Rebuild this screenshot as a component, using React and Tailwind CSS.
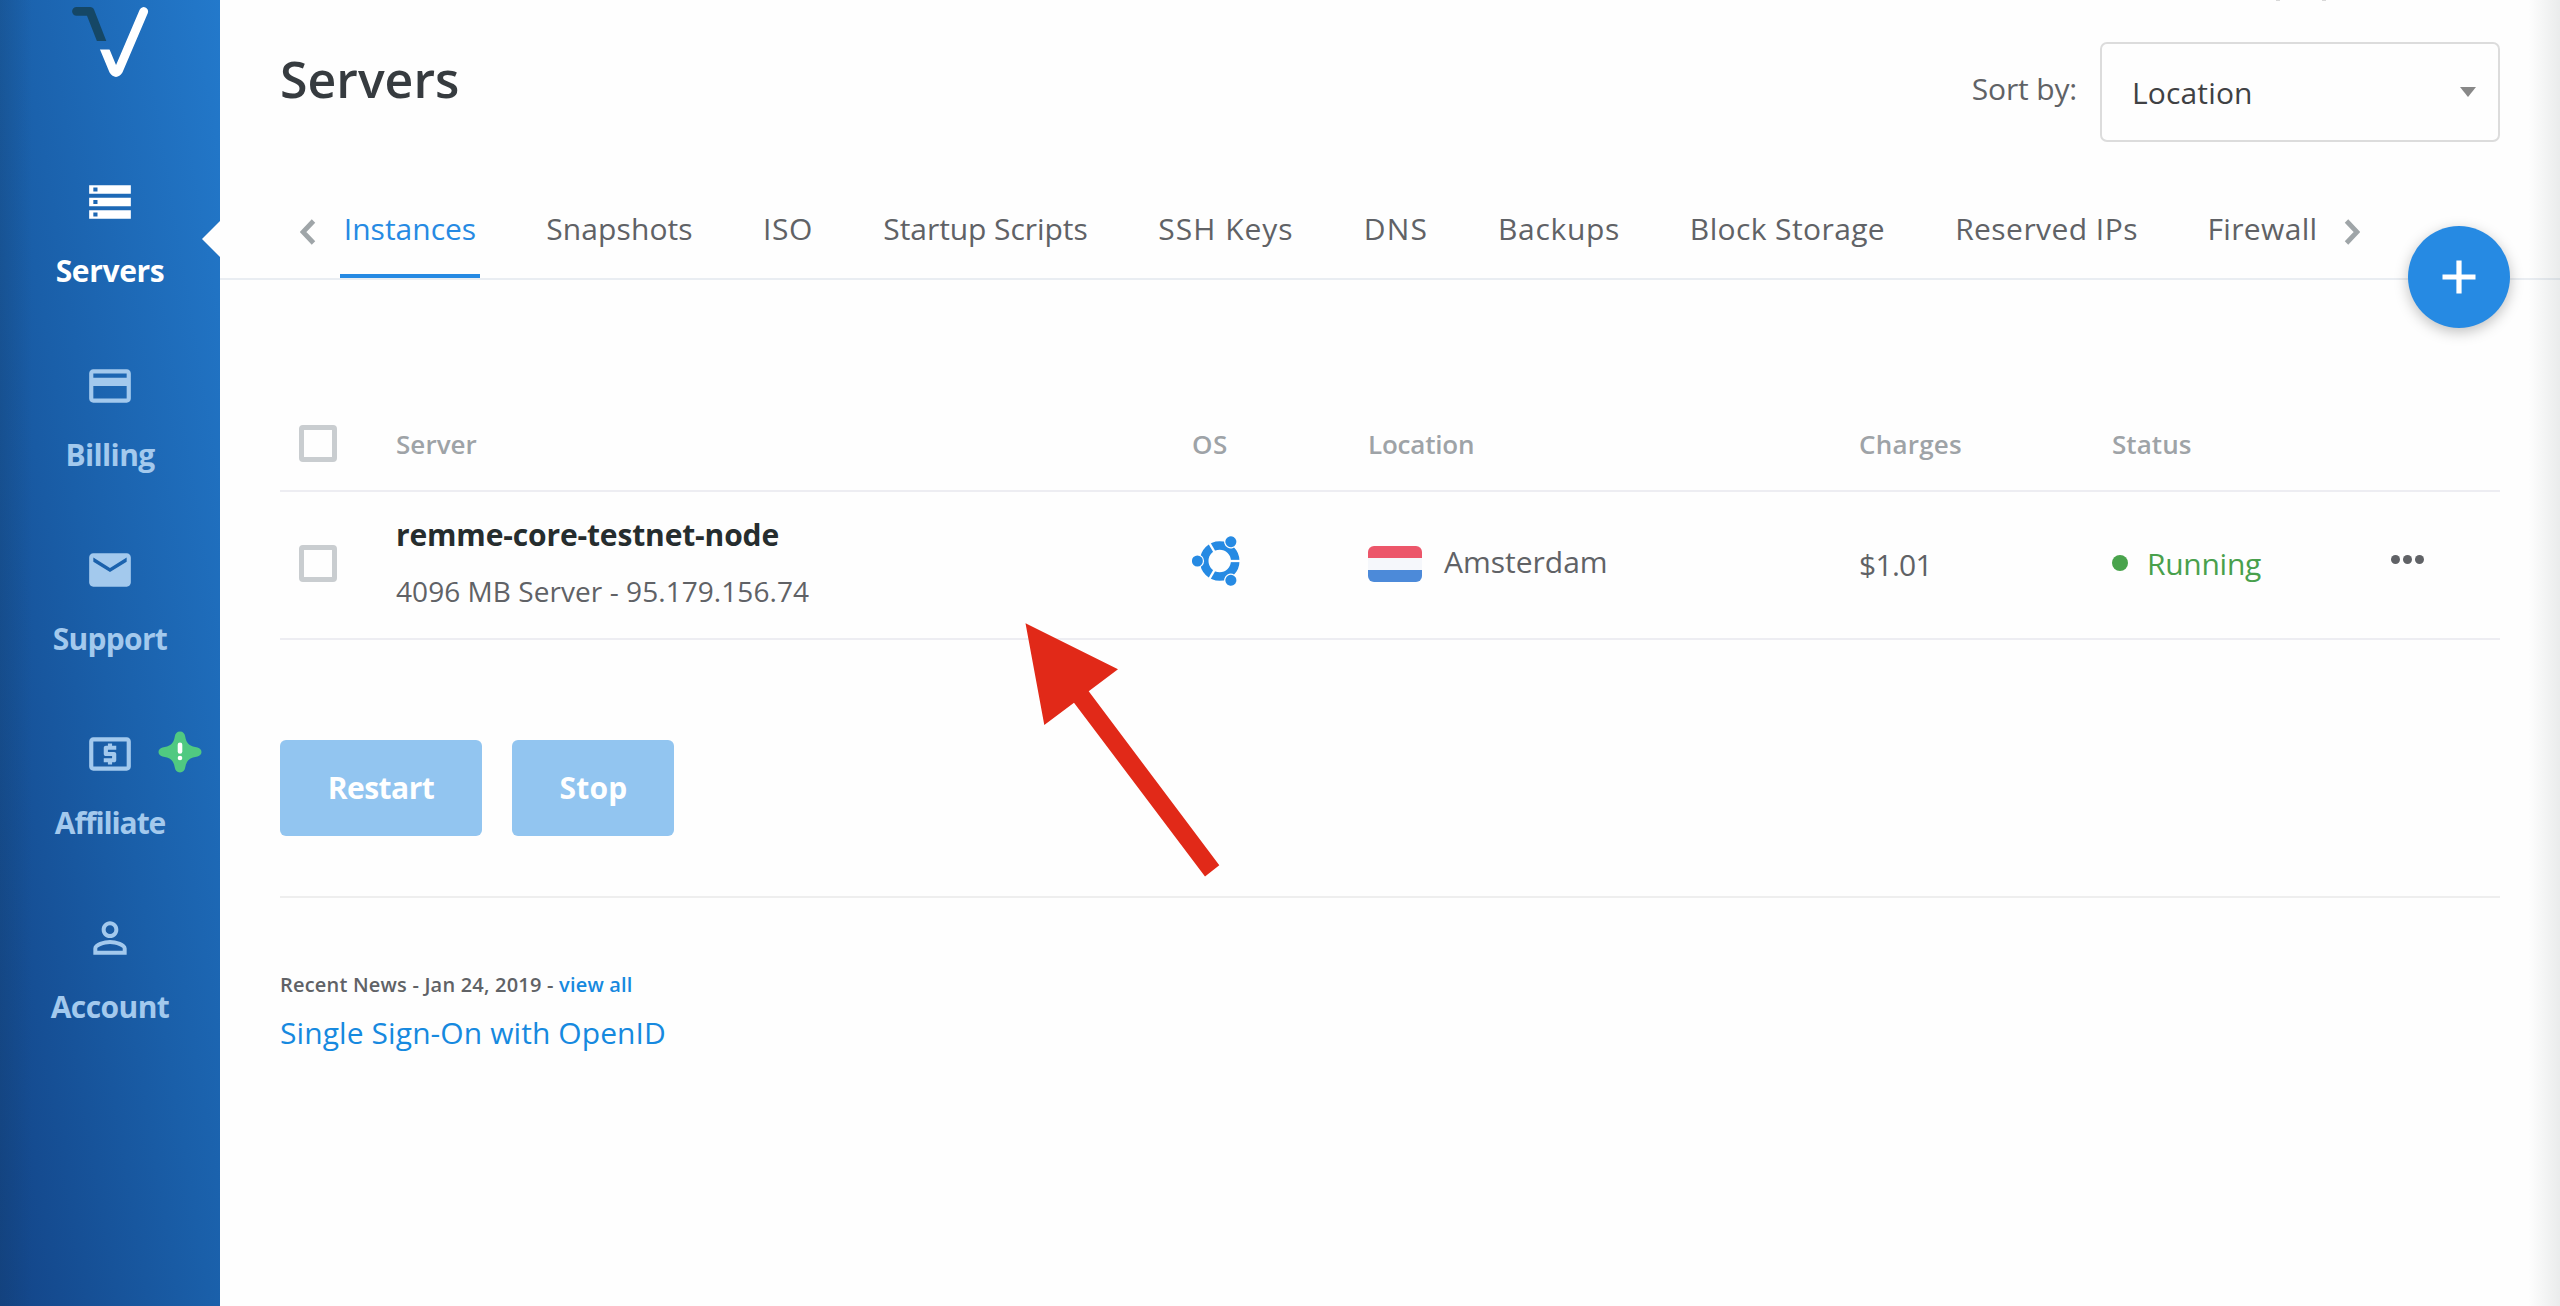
import { MdStorage, MdPayment, MdEmail, MdLocalAtm, MdPersonOutline } from "react-icons/md";

const NAV = [
  { label: "Servers", Icon: MdStorage, track: "tracking-[-0.38px]", active: true },
  { label: "Billing", Icon: MdPayment, track: "tracking-[-0.6px]" },
  { label: "Support", Icon: MdEmail, track: "tracking-[-0.73px]" },
  { label: "Affiliate", Icon: MdLocalAtm, track: "tracking-[-1.1px]", badge: true },
  { label: "Account", Icon: MdPersonOutline, track: "tracking-[-0.59px]" },
];

const TABS = [
  { label: "Instances", cls: "w-[140px] tracking-[-0.01px]", active: true },
  { label: "Snapshots", cls: "w-[156px] tracking-[0.09px]" },
  { label: "ISO", cls: "w-[58px] tracking-[0.59px]" },
  { label: "Startup Scripts", cls: "w-[214px] tracking-[-0.07px]" },
  { label: "SSH Keys", cls: "w-[144px] tracking-[0.99px]" },
  { label: "DNS", cls: "w-[73px] tracking-[1.3px]" },
  { label: "Backups", cls: "w-[130px] tracking-[0.68px]" },
  { label: "Block Storage", cls: "w-[204px] tracking-[0.39px]" },
  { label: "Reserved IPs", cls: "w-[191px] tracking-[0.44px]" },
  { label: "Firewall", cls: "w-[118px] tracking-[0.34px]" },
];

const COLS = "grid grid-cols-[116px_796px_176px_491px_253px_279px_1fr] items-center";

function Logo() {
  return (
    <svg className="mx-auto block h-[78px] w-[80px]" viewBox="70 0 80 78">
      <path d="M76.500 11.300H90L102 42" fill="none" stroke="#154766" strokeWidth="8.800" strokeLinecap="round" strokeLinejoin="round" clipPath="url(#logo-top)" />
      <path d="M102.500 44L113.500 70.500Q116 74.500 118.500 70.500L143.700 11.500" fill="none" stroke="#fff" strokeWidth="8.800" strokeLinecap="round" strokeLinejoin="round" clipPath="url(#logo-bottom)" />
      <defs>
        <clipPath id="logo-top"><rect x="70" y="0" width="50" height="41" /></clipPath>
        <clipPath id="logo-bottom"><path d="M70 49.500H113V0H150V78H70Z" /></clipPath>
      </defs>
    </svg>
  );
}

function StarBadge() {
  return (
    <svg className="absolute top-[2px] left-[158px] h-[42px] w-[44px]" viewBox="0 0 44 42">
      <path
        fill="#50c981"
        d="M22 0.500C25 0.500 26.800 2.600 27.200 5.400C28 10.400 30 13.800 35 15.400L39.500 16.600C42 17.400 43.500 19 43.500 21C43.500 23 42 24.600 39.500 25.400L35 26.600C30 28.200 28 31.600 27.200 36.600C26.800 39.400 25 41.500 22 41.500C19 41.500 17.200 39.400 16.800 36.600C16 31.600 14 28.200 9 26.600L4.500 25.400C2 24.600 0.500 23 0.500 21C0.500 19 2 17.400 4.500 16.600L9 15.400C14 13.800 16 10.400 16.800 5.400C17.200 2.600 19 0.500 22 0.500Z"
      />
      <path d="M22 13.800V20.500" stroke="#fff" strokeWidth="4.600" strokeLinecap="round" />
      <circle cx="22" cy="27" r="2.300" fill="#fff" />
    </svg>
  );
}

function Chevron({ flip }) {
  return (
    <svg className={flip ? "h-[26px] w-[16px] rotate-180" : "h-[26px] w-[16px]"} viewBox="0 0 16 26">
      <path d="M13.500 2L3 13L13.500 24" fill="none" stroke="#9fa5a8" strokeWidth="4.800" />
    </svg>
  );
}

function UbuntuIcon() {
  return (
    <svg className="h-[50px] w-[50px]" viewBox="0 0 50 50">
      <circle cx="27.700" cy="25" r="15.500" fill="none" stroke="#268ae3" strokeWidth="8.600" />
      {[0, 120, 240].map((a) => (
        <path key={a} d="M36 25H50" stroke="#fefefe" strokeWidth="2.300" transform={`rotate(${a} 27.700 25)`} />
      ))}
      {[60, 180, 300].map((a) => (
        <g key={a} transform={`rotate(${a} 27.700 25)`}>
          <circle cx="50" cy="25" r="6.700" fill="#fefefe" />
          <circle cx="50" cy="25" r="5.500" fill="#268ae3" />
        </g>
      ))}
    </svg>
  );
}

function Checkbox() {
  return <span className="ml-[19px] block h-[37px] w-[38px] rounded-[4px] border-[5px] border-[#c9cdd0]" />;
}

export default function App() {
  return (
    <div className="relative flex h-[1306px] w-[2560px] overflow-hidden bg-[#fefefe] font-['Open_Sans',sans-serif]">
      <aside className="relative h-full w-[220px] shrink-0 bg-[linear-gradient(to_bottom_left,#2379cb,#1a5fa9_52%,#134487)]">
        <div className="absolute inset-y-0 left-0 w-[32px] bg-linear-to-r from-[#143c64]/25 to-transparent" />
        <Logo />
        <nav className="relative mt-[99px]">
          {NAV.map(({ label, Icon, track, active, badge }) => (
            <div key={label} className={`relative flex h-[184px] flex-col items-center ${active ? "text-white" : "text-[#a3c9ed]"}`}>
              <Icon className="size-[50px]" />
              <span className={`mt-[26px] text-[30px] leading-[36px] font-bold ${track}`}>{label}</span>
              {badge && <StarBadge />}
              {active && (
                <svg className="absolute top-[44px] right-0 h-[36px] w-[18px]" viewBox="0 0 18 36">
                  <path d="M18 0V36L0 18Z" fill="#fefefe" />
                </svg>
              )}
            </div>
          ))}
        </nav>
      </aside>

      <main className="min-w-0 flex-1">
        <header className="flex items-start justify-between pt-[42px] pr-[60px] pl-[60px]">
          <h1 className="mt-[7px] text-[50px] leading-[60px] font-semibold text-[#363b3f]">Servers</h1>
          <div className="flex items-start">
            <span className="mt-[29px] mr-[23px] text-[30px] leading-[36px] tracking-[-0.15px] text-[#606266]">Sort by:</span>
            <div className="flex h-[100px] w-[400px] items-center justify-between rounded-[7px] border-2 border-[#dcdcdc] pr-[22px] pl-[30px]">
              <span className="mt-px text-[30px] leading-[36px] tracking-[0.15px] text-[#3f4144]">Location</span>
              <span className="h-0 w-0 border-x-8 border-t-10 border-x-transparent border-t-[#888888]" />
            </div>
          </div>
        </header>

        <div className="relative flex h-[138px] items-end border-b-2 border-[#e9edf2] pl-[80px]">
          <div className="mb-[33px]"><Chevron /></div>
          <nav className="ml-[24px] flex gap-[61.5px]">
            {TABS.map(({ label, cls, active }) => (
              <div
                key={label}
                className={`flex h-[67px] justify-center whitespace-nowrap border-b-4 text-[30px] leading-[36px] ${cls} ${
                  active ? "border-[#268ae3] text-[#268ae3]" : "border-transparent text-[#606266]"
                }`}
              >
                {label}
              </div>
            ))}
          </nav>
          <div className="mb-[33px] ml-[22px]"><Chevron flip /></div>
          <button className="absolute right-[50px] -bottom-[50px] flex size-[102px] items-center justify-center rounded-full bg-[#268ae3] shadow-[0_4px_14px_rgba(0,0,0,0.25)]">
            <svg className="size-[34px]" viewBox="0 0 34 34">
              <path d="M17 0.500V33.500M0.500 17H33.500" stroke="#fff" strokeWidth="5.200" />
            </svg>
          </button>
        </div>

        <div className="px-[60px] text-[#606266]">
          <div className={`mt-[122px] h-[90px] border-b-2 border-[#ededf2] pb-[5px] text-[26px] leading-[32px] font-semibold text-[#9ea3a7] ${COLS}`}>
            <Checkbox />
            <span className="tracking-[0.05px]">Server</span>
            <span className="tracking-[0.54px]">OS</span>
            <span className="tracking-[-0.2px]">Location</span>
            <span className="tracking-[0.22px]">Charges</span>
            <span className="tracking-[0.05px]">Status</span>
          </div>

          <div className={`h-[148px] border-b-2 border-[#ededf2] text-[30px] leading-[36px] ${COLS}`}>
            <div className="-mt-[3px]"><Checkbox /></div>
            <div className="-mt-[5px]">
              <div className="font-bold tracking-[-0.15px] text-[#262d2e]">remme-core-testnet-node</div>
              <div className="mt-[21px] text-[28px] leading-[34px] tracking-[0.06px]">4096 MB Server - 95.179.156.74</div>
            </div>
            <div className="-mt-[9px]"><UbuntuIcon /></div>
            <div className="-mt-[3px] flex items-center">
              <div className="h-[36px] w-[54px] overflow-hidden rounded-[6px] bg-[linear-gradient(#ec566a_0_12px,#f5f7fb_12px_24px,#4c8ad9_24px_36px)]" />
              <span className="-mt-[4px] ml-[22px]">Amsterdam</span>
            </div>
            <span className="tracking-[-0.7px]">$1.01</span>
            <div className="-mt-[3px] flex items-center">
              <span className="-mt-[2px] size-4 rounded-full bg-[#49a34c]" />
              <span className="ml-[19px] tracking-[-0.28px] text-[#49a04c]">Running</span>
            </div>
            <div className="-mt-[12px] flex gap-[3px]">
              <span className="size-[9px] rounded-full bg-[#606266]" />
              <span className="size-[9px] rounded-full bg-[#606266]" />
              <span className="size-[9px] rounded-full bg-[#606266]" />
            </div>
          </div>

          <div className="mt-[100px] flex gap-[30px] text-[30px] leading-[36px] font-bold text-white">
            <button className="h-[96px] w-[202px] rounded-[6px] bg-[#92c5f0] tracking-[-0.53px]">Restart</button>
            <button className="h-[96px] w-[162px] rounded-[6px] bg-[#92c5f0] pl-px tracking-[0.2px]">Stop</button>
          </div>

          <footer className="mt-[60px] border-t-2 border-[#eeeeee] pt-[75px]">
            <p className="text-[20px] leading-[24px] font-semibold tracking-[0.2px]">
              Recent News - Jan 24, 2019 - <a className="text-[#1689df]">view all</a>
            </p>
            <a className="mt-[18px] block text-[30px] leading-[36px] tracking-[0.09px] text-[#1689df]">Single Sign-On with OpenID</a>
          </footer>
        </div>
      </main>

      <div className="pointer-events-none absolute inset-y-0 right-0 w-[32px] bg-linear-to-r from-transparent to-[#1e3232]/9" />
      <div className="absolute top-0 left-[2276px] flex gap-[42px]">
        <span className="h-px w-[4px] bg-[#d8d8d8]" />
        <span className="h-px w-[4px] bg-[#d8d8d8]" />
      </div>
      <svg className="pointer-events-none absolute top-[600px] left-[980px] h-[300px] w-[280px]" viewBox="0 0 280 300">
        <path d="M45.500 23.300L138 69.300L108.700 91.300L239.300 265.300L225 276.500L94 102.700L64.300 125Z" fill="#e12918" />
      </svg>
    </div>
  );
}
